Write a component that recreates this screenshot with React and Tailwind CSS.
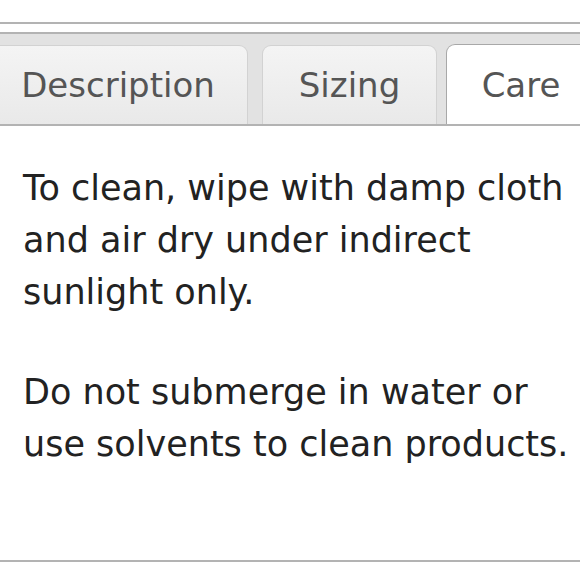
import React, { useState } from "react";

const tabs = [
  { name: "Description", w: "w-[260px]", ml: "ml-0" },
  { name: "Sizing", w: "w-[175px]", ml: "ml-[14px]" },
  { name: "Care", w: "w-[150px]", ml: "ml-[9px]" },
];

function App() {
  const [active, setActive] = useState("Care");

  return (
    <div
      className="min-h-screen bg-white pt-[22px]"
      style={{ fontFamily: '"DejaVu Sans", Verdana, sans-serif' }}
    >
      <div className="border-t-2 border-[#b3b3b3]" />
      <div className="mt-[8px] border-t-2 border-b-2 border-[#b3b3b3] bg-[#e2e2e2] pt-[10px] overflow-hidden">
        <div className="flex items-end ml-[-12px] -mb-[2px]">
          {tabs.map((t) => {
            const on = t.name === active;
            return (
              <button
                key={t.name}
                onClick={() => setActive(t.name)}
                className={
                  t.w +
                  " " +
                  t.ml +
                  (on
                    ? " shrink-0 h-[82px] rounded-t-[9px] border border-b-0 border-[#a8a8a8] bg-white text-[34px] text-[#555]"
                    : " shrink-0 h-[79px] mb-[2px] rounded-t-[9px] border border-b-0 border-[#d2d2d2] bg-gradient-to-b from-[#f4f4f4] to-[#e9e9e9] text-[34px] text-[#555]")
                }
              >
                {t.name}
              </button>
            );
          })}
        </div>
      </div>
      <div className="pl-[23px] pr-[8px] pt-[36px] pb-[90px] text-[35px] leading-[52px] text-[#222] border-b-2 border-[#b3b3b3]">
        <p>To clean, wipe with damp cloth and air dry under indirect sunlight only.</p>
        <p className="mt-[48px]">Do not submerge in water or use solvents to clean products.</p>
      </div>
    </div>
  );
}

export default App;
